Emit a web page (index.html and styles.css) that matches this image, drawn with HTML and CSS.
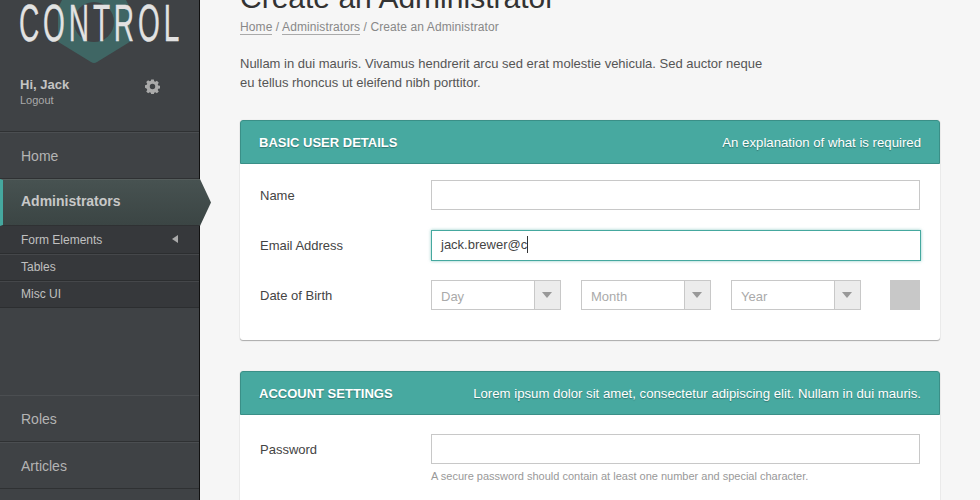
FILE: index.html
```html
<!DOCTYPE html>
<html>
  <head>
    <meta charset="utf-8">
    <title>Control - Create an Administrator</title>
    <link rel="stylesheet" href="styles.css">
  </head>
  <body>
    <div class="sidebar">
      <div class="brand">
        <svg class="brand-mark" width="80" height="64" viewBox="0 0 80 64">
          <path d="M8 -2 L70 -2 L75 8 L75 40 Q75 42 73 43 L42 62 Q39 64 36 62 L5 43 Q3 42 3 40 L3 8 Z" fill="#3f6664"/>
          <circle cx="39" cy="22" r="20" fill="#3f4245"/>
        </svg>
        <div class="brand-name">CONTROL</div>
      </div>
      <div class="user">
        <div>
          <div class="user-name">Hi, Jack</div>
          <div class="user-logout">Logout</div>
        </div>
        <svg class="user-gear" width="15" height="15" viewBox="0 0 16 16">
          <path fill="#aaa" fill-rule="evenodd" d="M6.6 1h2.8l.4 2 1.2.5 1.7-1.1 2 2-1.1 1.7.5 1.2 1.9.4v2.8l-1.9.4-.5 1.2 1.1 1.7-2 2-1.7-1.1-1.2.5-.4 1.8H6.6l-.4-1.8-1.2-.5-1.7 1.1-2-2 1.1-1.7-.5-1.2L0 9.9V7.1l1.9-.4.5-1.2-1.1-1.7 2-2L5 2.9l1.2-.5zM8 5.6a2.9 2.9 0 1 0 0 5.8 2.9 2.9 0 0 0 0-5.8z" transform="translate(0 -.5)"/>
        </svg>
      </div>
      <div class="nav">
        <a class="nav-item">Home</a>
        <a class="nav-item active">Administrators</a>
        <div class="subnav">
          <a class="subnav-item current">Form Elements</a>
          <a class="subnav-item">Tables</a>
          <a class="subnav-item">Misc UI</a>
        </div>
      </div>
      <div class="nav nav-lower">
        <a class="nav-item">Roles</a>
        <a class="nav-item">Articles</a>
      </div>
    </div>

    <div class="main">
      <h1>Create an Administrator</h1>
      <div class="breadcrumb"><a>Home</a> / <a>Administrators</a> / Create an Administrator</div>
      <p class="intro">Nullam in dui mauris. Vivamus hendrerit arcu sed erat molestie vehicula. Sed auctor neque<br>eu tellus rhoncus ut eleifend nibh porttitor.</p>

      <div class="card">
        <div class="card-head">
          <h2>Basic User Details</h2>
          <span>An explanation of what is required</span>
        </div>
        <div class="card-body">
          <div class="field">
            <label>Name</label>
            <div class="input"></div>
          </div>
          <div class="field">
            <label>Email Address</label>
            <div class="input focus">jack.brewer@c<i class="caret"></i></div>
          </div>
          <div class="field">
            <label>Date of Birth</label>
            <div class="selects">
              <div class="select"><span>Day</span><b></b></div>
              <div class="select"><span>Month</span><b></b></div>
              <div class="select"><span>Year</span><b></b></div>
              <div class="swatch"></div>
            </div>
          </div>
        </div>
      </div>

      <div class="card">
        <div class="card-head">
          <h2>Account Settings</h2>
          <span>Lorem ipsum dolor sit amet, consectetur adipiscing elit. Nullam in dui mauris.</span>
        </div>
        <div class="card-body second">
          <div class="field">
            <label>Password</label>
            <div class="field-main">
              <div class="input"></div>
              <div class="help">A secure password should contain at least one number and special character.</div>
            </div>
          </div>
        </div>
      </div>
    </div>
  </body>
</html>
```

FILE: styles.css
```css
html, body {
  height: 500px;
  margin: 0;
  overflow: hidden;
}

body {
  display: flex;
  background-color: #f6f6f6;
  font-family: "Liberation Sans", Arial, sans-serif;
  color: #444;
}

.sidebar {
  display: flex;
  flex-direction: column;
  flex: none;
  width: 199px;
  height: 500px;
  background-color: #3f4245;
  border-right: 1px solid #111;
}

.brand {
  position: relative;
  height: 66px;
}

.brand-mark {
  position: absolute;
  left: 55px;
  top: 0;
}

/* no narrow font installed, so squeeze the regular one */
.brand-name {
  position: relative;
  width: 290px;
  margin-left: 19px;
  font-size: 51px;
  line-height: 47px;
  letter-spacing: 7px;
  color: #e2e2e2;
  -webkit-text-stroke: .3px #e2e2e2;
  transform: scaleX(.55);
  transform-origin: left top;
}

.user {
  display: flex;
  justify-content: space-between;
  height: 66px;
  padding: 11px 39px 0 20px;
  box-sizing: border-box;
  border-bottom: 1px solid #2f3133;
}

.user-name {
  font-size: 13px;
  font-weight: bold;
  line-height: 15px;
  color: #c4c4c4;
}

.user-logout {
  font-size: 11px;
  line-height: 16px;
  color: #aaa;
}

.user-gear {
  margin-top: 2px;
}

.nav-item {
  display: block;
  height: 47px;
  padding-left: 21px;
  border-top: 1px solid #4b4e51;
  border-bottom: 1px solid #2f3133;
  box-sizing: border-box;
  font-size: 14px;
  line-height: 47px;
  color: #b4b4b4;
}

.nav-lower .nav-item {
  line-height: 46px;
}

.nav-item.active {
  position: relative;
  width: 211px;
  padding-left: 18px;
  border-left: 3px solid #45a89f;
  border-top: 1px solid #555d5c;
  border-bottom: 1px solid #2f3133;
  background: linear-gradient(#475251, #3b4544);
  font-weight: bold;
  line-height: 43px;
  color: #c8c8c8;
  clip-path: polygon(0 0, 200px 0, 100% 50%, 200px 100%, 0 100%);
}

.subnav {
  padding-top: 0;
  background-color: #36383b;
}

.subnav-item {
  display: block;
  position: relative;
  height: 27px;
  padding-left: 21px;
  border-bottom: 1px solid #2c2e30;
  border-top: 1px solid #45474a;
  box-sizing: border-box;
  font-size: 12px;
  line-height: 24px;
  color: #c0c0c0;
}

.subnav-item.current {
  height: 28px;
  border-top: 0;
  line-height: 28px;
}

.subnav-item.current::after {
  content: "";
  position: absolute;
  left: 172px;
  top: 9px;
  border-right: 6px solid #aaa;
  border-top: 4px solid transparent;
  border-bottom: 4px solid transparent;
}

.nav-lower {
  margin-top: auto;
  margin-bottom: 11px;
}

.main {
  flex: none;
  width: 700px;
  margin-left: 40px;
}

h1 {
  margin: -22px 0 0;
  font-size: 30px;
  font-weight: normal;
  line-height: 40px;
  color: #333;
}

.breadcrumb {
  margin-top: 1px;
  font-size: 12px;
  line-height: 16px;
  letter-spacing: .1px;
  color: #888;
}

.breadcrumb a {
  border-bottom: 1px solid #aaa;
}

.intro {
  width: 600px;
  margin: 19px 0 28px;
  font-size: 13px;
  line-height: 19px;
  color: #555;
}

.card {
  margin-bottom: 31px;
  background-color: #fff;
  border-radius: 3px;
  box-shadow: 0 1px 1px #aaa, 0 0 1px #ccc;
}

.card-head {
  display: flex;
  justify-content: space-between;
  align-items: center;
  height: 44px;
  padding: 0 18px;
  box-sizing: border-box;
  background-color: #47a9a0;
  border: 1px solid #3a8f87;
  border-radius: 3px 3px 0 0;
  color: #fff;
  font-size: 13.2px;
  text-shadow: 0 1px 1px rgba(0, 0, 0, .3);
}

.card-head h2 {
  margin: 0;
  font-size: 13px;
  text-transform: uppercase;
}

.card-body {
  display: flex;
  flex-direction: column;
  gap: 20px;
  padding: 16px 20px 30px;
}

.card-body.second {
  padding-top: 19px;
}

.field {
  display: flex;
}

.field label {
  flex: none;
  width: 171px;
  height: 30px;
  font-size: 13px;
  line-height: 32px;
  color: #444;
}

.field-main {
  flex: 1;
}

.input {
  flex: 1;
  height: 30px;
  padding-left: 9px;
  box-sizing: border-box;
  background-color: #fff;
  border: 1px solid #c8c8c8;
  font-size: 13px;
  line-height: 28px;
  color: #444;
}

.input.focus {
  height: 31px;
  margin: 0 -1px -1px 0;
  border-color: #45a89f;
  box-shadow: 0 0 3px rgba(69, 168, 159, .6);
}

.caret {
  display: inline-block;
  width: 1px;
  height: 17px;
  vertical-align: -4px;
  background-color: #333;
}

.help {
  margin-top: 5px;
  font-size: 11px;
  line-height: 14px;
  color: #999;
}

.selects {
  display: flex;
  flex: 1;
  gap: 20px;
}

.select {
  display: flex;
  justify-content: space-between;
  width: 130px;
  height: 30px;
  box-sizing: border-box;
  border: 1px solid #c8c8c8;
  font-size: 13px;
  line-height: 31px;
  color: #aaa;
}

.select span {
  padding-left: 9px;
}

.select b {
  position: relative;
  width: 25px;
  background-color: #ececec;
  border-left: 1px solid #c8c8c8;
}

.select b::after {
  content: "";
  position: absolute;
  left: 7px;
  top: 11px;
  border-top: 6px solid #999;
  border-left: 5px solid transparent;
  border-right: 5px solid transparent;
}

.swatch {
  width: 30px;
  height: 30px;
  margin-left: 9px;
  background-color: #c8c8c8;
}
```
